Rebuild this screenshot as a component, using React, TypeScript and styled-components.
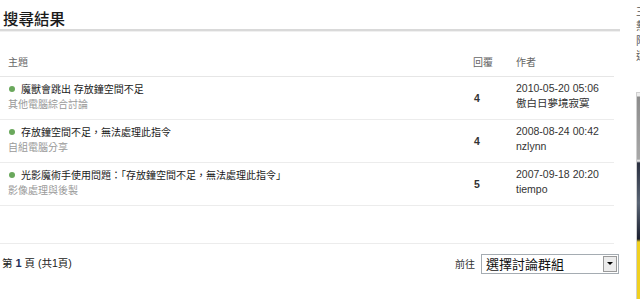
import React from "react";
import styled, { createGlobalStyle } from "styled-components";

const Global = createGlobalStyle`
  html, body { margin: 0; padding: 0; background: #fff; overflow: hidden; }
  body { font-family: "Liberation Sans", Arial, "Noto Sans CJK TC", sans-serif; color: #333; }
`;

const Page = styled.div`
  display: flex;
  width: 900px;
`;

const Main = styled.div`
  width: 620px;
  flex: none;
`;

const Title = styled.h2`
  margin: 0;
  padding: 7px 0 0 3px;
  height: 22px;
  line-height: 22px;
  font-size: 15.5px;
  font-weight: 500;
  color: #1a1a1a;
  font-family: "Noto Sans CJK TC", sans-serif;
  border-bottom: 2px solid #d9d9d9;
  box-shadow: 0 1px 0 #f0f0f0;
`;

const Table = styled.div`
  width: 614px;
`;

const Row = styled.div<{ $head?: boolean }>`
  display: grid;
  grid-template-columns: 473px 43px 1fr;
  border-bottom: 1px solid ${(p) => (p.$head ? "#e6e6e6" : "#ececec")};
  ${(p) =>
    p.$head
      ? `height: 45px; align-items: end;`
      : `height: 42px; align-items: start;`}
`;

const HeadCell = styled.div<{ $first?: boolean }>`
  font-size: 10px;
  color: #666;
  line-height: 14px;
  padding: 0 0 7px ${(p) => (p.$first ? "8px" : "0")};
  font-family: "Noto Sans CJK TC", sans-serif;
`;

const TopicCell = styled.div`
  padding: 4px 0 0 8px;
`;

const TopicLine = styled.div`
  display: flex;
  align-items: center;
  height: 15px;
  font-size: 10px;
  color: #1a1a1a;
  font-family: "Liberation Sans", "Noto Sans CJK TC", sans-serif;
`;

const Dot = styled.span`
  width: 6px;
  height: 6px;
  border-radius: 50%;
  background: #6aa85c;
  margin: 0 6px 0 1px;
  flex: none;
`;

const Forum = styled.div`
  height: 15px;
  line-height: 15px;
  font-size: 10px;
  color: #9a9a9a;
  font-family: "Noto Sans CJK TC", sans-serif;
`;

const Count = styled.div`
  font-size: 10.5px;
  font-weight: bold;
  color: #333;
  line-height: 42px;
  padding-left: 1px;
`;

const AuthorCell = styled.div`
  padding-top: 4px;
`;

const Line = styled.div`
  height: 15px;
  line-height: 15px;
  font-size: 10.5px;
  color: #333;
  white-space: nowrap;
  font-family: "Liberation Sans", "Noto Sans CJK TC", sans-serif;
`;

const Spacer = styled.div`
  height: 37px;
  width: 614px;
  border-bottom: 1px solid #ececec;
`;

const Footer = styled.div`
  width: 620px;
  height: 36px;
  display: flex;
  justify-content: space-between;
  align-items: center;
`;

const Pager = styled.div`
  font-size: 10.5px;
  color: #222;
  padding-left: 2px;
  font-family: "Liberation Sans", "Noto Sans CJK TC", sans-serif;
  b { font-weight: bold; color: #1d2f5a; font-size: 11px; }
`;

const Jump = styled.div`
  display: flex;
  align-items: center;
  gap: 6px;
  font-size: 10px;
  color: #333;
  font-family: "Noto Sans CJK TC", sans-serif;
  margin-top: 3px;
`;

const Select = styled.div`
  width: 138px;
  height: 20px;
  border: 1px solid #a5acb2;
  display: flex;
  align-items: center;
  justify-content: space-between;
  box-sizing: border-box;
  background: #fff;
  margin-right: 1px;
`;

const SelectText = styled.span`
  font-size: 13px;
  color: #111;
  padding-left: 4px;
  font-family: "Noto Sans CJK TC", sans-serif;
  line-height: 18px;
`;

const Arrow = styled.span`
  width: 14px;
  height: 16px;
  margin-right: 1px;
  background: #ececec;
  border: 1px solid #9a9a9a;
  box-sizing: border-box;
  display: flex;
  align-items: center;
  justify-content: center;
  &::after {
    content: "";
    border-left: 3px solid transparent;
    border-right: 3px solid transparent;
    border-top: 3px solid #000;
  }
`;

const Side = styled.div`
  margin-left: 16px;
  width: 190px;
  flex: none;
  padding-top: 3px;
`;

const SideText = styled.div`
  font-size: 11px;
  height: 15px;
  line-height: 15px;
  color: #555;
  font-family: "Noto Sans CJK TC", sans-serif;
  white-space: nowrap;
`;

const SideImage = styled.div`
  margin-top: 29px;
  width: 180px;
  height: 215px;
  border: 1px solid #d0d0d0;
  box-sizing: border-box;
  background: linear-gradient(
    to bottom,
    #eeeeee 0px,
    #eeeeee 3px,
    #8c8c8c 4px,
    #a8a8a8 66px,
    #f4f4f4 68px,
    #2a3040 70px,
    #5a6575 110px,
    #1c2030 146px,
    #f0d020 149px,
    #f0d020 100%
  );
`;

const topics = [
  {
    title: "魔獸會跳出 存放鐘空間不足",
    forum: "其他電腦綜合討論",
    count: 4,
    date: "2010-05-20 05:06",
    author: "傲白日夢境寂寞",
  },
  {
    title: "存放鐘空間不足，無法處理此指令",
    forum: "自組電腦分享",
    count: 4,
    date: "2008-08-24 00:42",
    author: "nzlynn",
  },
  {
    title: "光影魔術手使用問題：「存放鐘空間不足，無法處理此指令」",
    forum: "影像處理與後製",
    count: 5,
    date: "2007-09-18 20:20",
    author: "tiempo",
  },
];

export default function App() {
  return (
    <Page>
      <Global />
      <Main>
        <Title>搜尋結果</Title>
        <Table>
          <Row $head>
            <HeadCell $first>主題</HeadCell>
            <HeadCell>回覆</HeadCell>
            <HeadCell>作者</HeadCell>
          </Row>
          {topics.map((t) => (
            <Row key={t.date}>
              <TopicCell>
                <TopicLine>
                  <Dot />
                  {t.title}
                </TopicLine>
                <Forum>{t.forum}</Forum>
              </TopicCell>
              <Count>{t.count}</Count>
              <AuthorCell>
                <Line>{t.date}</Line>
                <Line>{t.author}</Line>
              </AuthorCell>
            </Row>
          ))}
          <Spacer />
        </Table>
        <Footer>
          <Pager>
            第 <b>1</b> 頁 (共1頁)
          </Pager>
          <Jump>
            前往
            <Select>
              <SelectText>選擇討論群組</SelectText>
              <Arrow />
            </Select>
          </Jump>
        </Footer>
      </Main>
      <Side>
        <SideText>主題搜尋結果</SideText>
        <SideText>熱門討論</SideText>
        <SideText>附件圖片</SideText>
        <SideText>還有更多</SideText>
        <SideImage />
      </Side>
    </Page>
  );
}
